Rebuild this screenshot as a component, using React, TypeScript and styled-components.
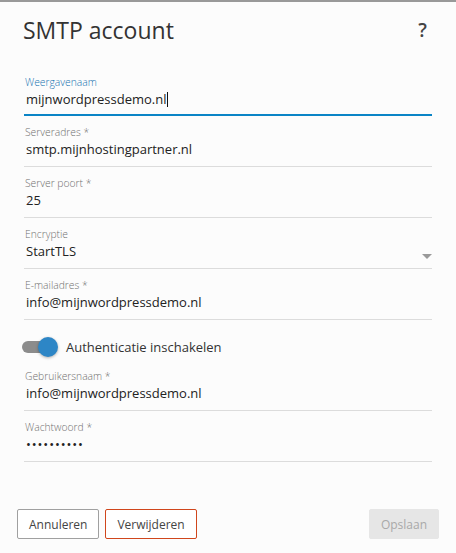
import { useState } from 'react'
import styled, { createGlobalStyle } from 'styled-components'

const GlobalStyle = createGlobalStyle`
  * {
    box-sizing: border-box;
  }
  body {
    margin: 0;
    background: #fcfcfc;
    font-family: 'Open Sans', 'Noto Sans', sans-serif;
    color: #222;
  }
`

type FieldData = {
  label: string
  value: string
  required?: boolean
  focused?: boolean
  select?: boolean
  secret?: boolean
}

const topFields: FieldData[] = [
  { label: 'Weergavenaam', value: 'mijnwordpressdemo.nl', focused: true },
  { label: 'Serveradres', value: 'smtp.mijnhostingpartner.nl', required: true },
  { label: 'Server poort', value: '25', required: true },
  { label: 'Encryptie', value: 'StartTLS', select: true },
  { label: 'E-mailadres', value: 'info@mijnwordpressdemo.nl', required: true },
]

const authFields: FieldData[] = [
  { label: 'Gebruikersnaam', value: 'info@mijnwordpressdemo.nl', required: true },
  { label: 'Wachtwoord', value: '••••••••••', required: true, secret: true },
]

const Field = ({ label, value, required, focused, select, secret }: FieldData) => (
  <FieldBox focused={focused}>
    <FieldLabel focused={focused}>
      {label}
      {required && ' *'}
    </FieldLabel>
    <FieldValue secret={secret}>
      {value}
      {focused && <Caret />}
    </FieldValue>
    {select && <SelectArrow />}
  </FieldBox>
)

const App = () => {
  const [authOn, setAuthOn] = useState(true)

  return (
    <>
      <GlobalStyle />
      <Dialog>
        <Header>
          <Title>SMTP account</Title>
          <HelpButton>?</HelpButton>
        </Header>

        <Form>
          {topFields.map((f) => (
            <Field key={f.label} {...f} />
          ))}

          <ToggleRow onClick={() => setAuthOn(!authOn)}>
            <Track on={authOn}>
              <Thumb on={authOn} />
            </Track>
            <ToggleText>Authenticatie inschakelen</ToggleText>
          </ToggleRow>

          {authFields.map((f) => (
            <Field key={f.label} {...f} />
          ))}
        </Form>

        <Footer>
          <Button>Annuleren</Button>
          <Button danger>Verwijderen</Button>
          <SaveButton disabled>Opslaan</SaveButton>
        </Footer>
      </Dialog>
    </>
  )
}

const Dialog = styled.div`
  display: flex;
  flex-direction: column;
  height: 100vh;
  border-top: 2px solid #999;
`

const Header = styled.div`
  display: flex;
  justify-content: space-between;
  align-items: center;
  padding: 13px 29px 0 23px;
`

const Title = styled.h1`
  margin: 0;
  font-size: 23px;
  line-height: 30px;
  font-weight: 400;
  color: #333;
`

const HelpButton = styled.span`
  font-size: 19px;
  line-height: 30px;
  font-weight: 600;
  color: #444;
  cursor: pointer;
`

const Form = styled.div`
  display: flex;
  flex-direction: column;
  padding: 21px 24px 0 24px;
`

const FieldBox = styled.div<{ focused?: boolean }>`
  position: relative;
  padding: 10px 0 ${(p) => (p.focused ? '6px' : '8px')} 0;
  border-bottom: ${(p) => (p.focused ? '2px solid #0a84c6' : '1px solid #dcdcdc')};
`

const FieldLabel = styled.div<{ focused?: boolean }>`
  font-size: 10.3px;
  line-height: 13px;
  font-weight: 300;
  color: ${(p) => (p.focused ? '#1672b0' : '#707070')};
  padding-left: 1px;
`

const FieldValue = styled.div<{ secret?: boolean }>`
  display: flex;
  align-items: center;
  font-size: 13px;
  line-height: 19px;
  height: 19px;
  padding-top: 1px;
  color: #222;
  padding-left: 2px;
  letter-spacing: ${(p) => (p.secret ? '0.9px' : '0')};
`

const Caret = styled.span`
  display: inline-block;
  width: 1px;
  height: 15px;
  margin-left: 1px;
  background: #111;
`

const SelectArrow = styled.span`
  position: absolute;
  right: 0;
  top: 36px;
  width: 0;
  height: 0;
  border-left: 5px solid transparent;
  border-right: 5px solid transparent;
  border-top: 5px solid #9a9a9a;
`

const ToggleRow = styled.div`
  display: flex;
  align-items: center;
  gap: 9px;
  height: 20px;
  box-sizing: content-box;
  padding: 17px 0 3px 0;
  margin-left: -2px;
  cursor: pointer;
`

const Track = styled.div<{ on: boolean }>`
  position: relative;
  width: 30px;
  height: 12px;
  border-radius: 6px;
  background: ${(p) => (p.on ? '#8c8c8c' : '#c8c8c8')};
  margin-right: 5px;
`

const Thumb = styled.div<{ on: boolean }>`
  position: absolute;
  top: -4px;
  left: ${(p) => (p.on ? '16px' : '-4px')};
  width: 20px;
  height: 20px;
  border-radius: 50%;
  background: ${(p) => (p.on ? '#2d86c6' : '#f2f2f2')};
  box-shadow: 0 1px 3px rgba(0, 0, 0, 0.3);
`

const ToggleText = styled.span`
  font-size: 13px;
  line-height: 20px;
  color: #333;
`

const Footer = styled.div`
  display: flex;
  gap: 6px;
  margin-top: auto;
  padding: 0 17px 14px 17px;
`

const Button = styled.button<{ danger?: boolean }>`
  height: 30px;
  padding: 0 11px;
  font-family: 'Open Sans', 'Noto Sans', sans-serif;
  font-size: 12px;
  color: #444;
  background: #fff;
  border: 1px solid ${(p) => (p.danger ? '#d0461c' : '#a0a0a0')};
  border-radius: 2px;
  cursor: pointer;
`

const SaveButton = styled(Button)`
  margin-left: auto;
  color: #a9a9a9;
  background: #e6e6e6;
  border-color: #e6e6e6;
  cursor: default;
`

export default App
